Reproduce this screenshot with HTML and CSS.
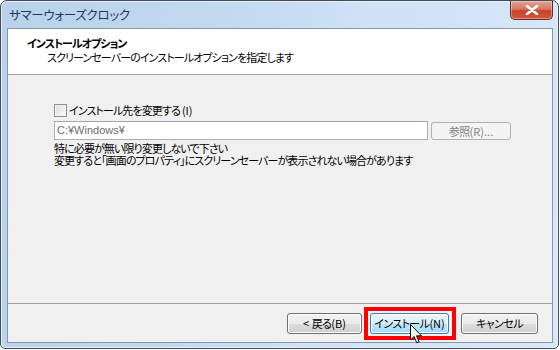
FILE: index.html
```html
<!DOCTYPE html>
<html lang="ja">
<head>
<meta charset="utf-8">
<link rel="stylesheet" href="styles.css">
</head>
<body>
<div class="window">
  <div class="titlebar">
    <span class="title">サマーウォーズクロック</span>
    <div class="close"><svg width="14" height="10" viewBox="0 0 14 10"><path d="M2 1 L12 9 M12 1 L2 9" stroke="#fff" stroke-width="2.6" stroke-linecap="round"/></svg></div>
  </div>
  <div class="client">
    <div class="header">
      <div class="h-title">インストールオプション</div>
      <div class="h-sub">スクリーンセーバーのインストールオプションを指定します</div>
    </div>
    <div class="main">
      <label class="check"><span class="box"></span>インストール先を変更する<span class="lat">(I)</span></label>
      <div class="pathrow">
        <div class="input">C:¥Windows¥</div>
        <div class="btn disabled browse">参照<span class="lat">(R)...</span></div>
      </div>
      <div class="note">
        <div class="line">特に必要が無い限り変更しないで下さい</div>
        <div class="line">変更すると「画面のプロパティ」にスクリーンセーバーが表示されない場合があります</div>
      </div>
    </div>
    <div class="footer">
      <div class="btn"><span class="lat">&lt;&nbsp;</span>戻る<span class="lat">(B)</span></div>
      <div class="highlight">
        <div class="btn focus">インストール<span class="lat">(N)</span></div>
        <svg class="cursor" width="13" height="20" viewBox="0 0 13 20"><path d="M0.5 0.5 L0.5 16 L4 12.5 L6.8 18.8 L9.2 17.8 L6.5 11.8 L11.5 11.8 Z" fill="#fff" stroke="#000" stroke-width="1"/></svg>
      </div>
      <div class="btn cancel">キャンセル</div>
    </div>
  </div>
</div>
</body>
</html>
```
FILE: styles.css
```css
* { box-sizing: border-box; }
html, body { margin: 0; padding: 0; background: #fff; }
body {
  font-family: "Noto Sans CJK JP", "Noto Sans", sans-serif;
  font-feature-settings: "palt";
  font-size: 11px;
  letter-spacing: -0.9px;
  color: #000;
  white-space: nowrap;
}
.lat { letter-spacing: 0; }
.window {
  width: 559px;
  height: 349px;
  border: 1px solid #434c57;
  border-radius: 7px 7px 5px 5px;
  background: linear-gradient(100deg, #b9d1ea 0%, #c4daf1 40%, #cfe2f6 60%, #d7e8f8 100%);
  display: flex;
  flex-direction: column;
  padding: 0 5px 5px 6px;
  box-shadow: inset 0 0 0 1px #e6f0fa;
}
.titlebar {
  height: 27px;
  display: flex;
  align-items: flex-start;
  justify-content: space-between;
}
.title {
  font-size: 12.5px;
  letter-spacing: -0.3px;
  color: #1e395b;
  margin: 4px 0 0 2px;
}
.close {
  width: 43px;
  height: 19px;
  border: 1px solid #6b2a20;
  border-top: none;
  border-radius: 0 0 5px 5px;
  background: linear-gradient(#e4a395 0%, #d67662 45%, #c4432a 55%, #d2583f 100%);
  display: flex;
  align-items: center;
  justify-content: center;
  box-shadow: inset 0 0 0 1px rgba(255,255,255,0.35);
}
.client {
  flex: 1;
  border: 1px solid #8397ad;
  background: #f0f0f0;
  display: flex;
  flex-direction: column;
}
.header {
  height: 46px;
  background: #fff;
  border-bottom: 1px solid #a0a0a0;
  padding: 7px 0 0 19px;
  line-height: 14px;
}
.h-title { font-weight: bold; letter-spacing: -1px; }
.h-sub { padding-left: 20px; }
.main {
  flex: 1;
  padding: 28px 0 0 46px;
}
.check {
  display: flex;
  align-items: center;
  gap: 2px;
  height: 14px;
  line-height: 14px;
}
.box {
  width: 13px;
  height: 13px;
  border: 1px solid #8f8f8f;
  background: linear-gradient(135deg, #dcdcdc, #fbfbfb);
  box-shadow: inset 0 0 0 1px #f4f4f4;
}
.pathrow {
  display: flex;
  gap: 3px;
  margin-top: 4px;
  align-items: flex-start;
}
.input {
  width: 374px;
  height: 19px;
  border: 1px solid #abadb3;
  border-top-color: #a3a6ae;
  background: #fff;
  color: #6d6d6d;
  font-family: "Liberation Sans", sans-serif;
  font-size: 11px;
  letter-spacing: 0;
  line-height: 17px;
  padding-left: 2px;
}
.btn {
  height: 21px;
  width: 75px;
  border: 1px solid #707070;
  border-radius: 3px;
  background: linear-gradient(#f2f2f2 0%, #ebebeb 50%, #dddddd 51%, #cfcfcf 100%);
  box-shadow: inset 0 0 0 1px #fcfcfc;
  display: flex;
  align-items: center;
  justify-content: center;
  line-height: 14px;
  letter-spacing: -0.6px;
}
.browse {
  width: 80px;
  height: 18px;
  margin-top: 1px;
}
.btn.disabled {
  border-color: #adb2b5;
  background: #f4f4f4;
  color: #838383;
  box-shadow: none;
}
.note {
  margin-top: 2px;
}
.line { height: 12px; line-height: 12px; }
.footer {
  height: 39px;
  border-top: 1px solid #a0a0a0;
  display: flex;
  align-items: center;
  justify-content: flex-end;
  padding-right: 14px;
}
.highlight {
  position: relative;
  border: 4px solid #ff0000;
  padding: 2px 3px 2px 2px;
  margin: 0 5px 0 2px;
}
.btn.focus {
  width: 79px;
  border-color: #3c7fb1;
  background: linear-gradient(#eaf6fd 0%, #d9f0fc 50%, #bee6fd 51%, #a7d9f5 100%);
  box-shadow: inset 0 0 0 1px #fff;
}
.cancel { width: 77px; }
.cursor {
  position: absolute;
  left: 42px;
  top: 13px;
}
```
